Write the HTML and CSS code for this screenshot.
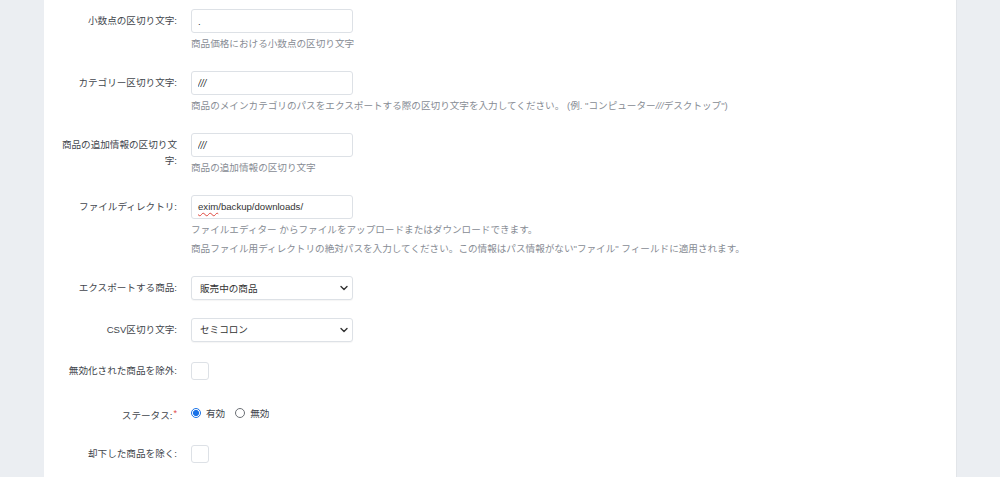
FILE: index.html
```html
<!DOCTYPE html>
<html lang="ja">
<head>
<meta charset="utf-8">
<title>エクスポート設定</title>
<link rel="stylesheet" href="styles.css">
</head>
<body>
<div class="page">
  <div class="panel">
    <div class="row">
      <label class="label">小数点の区切り文字:</label>
      <div class="field">
        <input class="input" type="text" value=".">
        <div class="help"><p>商品価格における小数点の区切り文字</p></div>
      </div>
    </div>
    <div class="row">
      <label class="label">カテゴリー区切り文字:</label>
      <div class="field">
        <input class="input slashes" type="text" value="///">
        <div class="help"><p>商品のメインカテゴリのパスをエクスポートする際の区切り文字を入力してください。 (例. "コンピューター<i>///</i>デスクトップ")</p></div>
      </div>
    </div>
    <div class="row">
      <label class="label">商品の追加情報の区切り文字:</label>
      <div class="field">
        <input class="input slashes" type="text" value="///">
        <div class="help"><p>商品の追加情報の区切り文字</p></div>
      </div>
    </div>
    <div class="row">
      <label class="label">ファイルディレクトリ:</label>
      <div class="field">
        <div class="input fake"><span class="typo">exim</span>/backup/downloads/</div>
        <div class="help">
          <p>ファイルエディター からファイルをアップロードまたはダウンロードできます。</p>
          <p>商品ファイル用ディレクトリの絶対パスを入力してください。この情報はパス情報がない"ファイル" フィールドに適用されます。</p>
        </div>
      </div>
    </div>
    <div class="row plain">
      <label class="label">エクスポートする商品:</label>
      <div class="field">
        <div class="select-wrap">
          <select class="select"><option>販売中の商品</option></select>
          <svg class="chev" width="8" height="6" viewBox="0 0 8 6"><path d="M1 1.5 L4 4.5 L7 1.5" fill="none" stroke="#333" stroke-width="1.4" stroke-linecap="round" stroke-linejoin="round"/></svg>
        </div>
      </div>
    </div>
    <div class="row plain">
      <label class="label">CSV区切り文字:</label>
      <div class="field">
        <div class="select-wrap">
          <select class="select"><option>セミコロン</option></select>
          <svg class="chev" width="8" height="6" viewBox="0 0 8 6"><path d="M1 1.5 L4 4.5 L7 1.5" fill="none" stroke="#333" stroke-width="1.4" stroke-linecap="round" stroke-linejoin="round"/></svg>
        </div>
      </div>
    </div>
    <div class="row plain">
      <label class="label">無効化された商品を除外:</label>
      <div class="field center"><span class="checkbox"></span></div>
    </div>
    <div class="row plain">
      <label class="label">ステータス:<span class="req">*</span></label>
      <div class="field center radios">
        <span class="radio-item"><span class="radio on"></span>有効</span>
        <span class="radio-item"><span class="radio"></span>無効</span>
      </div>
    </div>
    <div class="row plain">
      <label class="label">却下した商品を除く:</label>
      <div class="field center"><span class="checkbox"></span></div>
    </div>
  </div>
</div>
</body>
</html>
```

FILE: styles.css
```css
* { box-sizing: border-box; }
html, body { margin: 0; padding: 0; }
body {
  background: #ebeef2;
  font-family: "Liberation Sans", "Noto Sans CJK JP", sans-serif;
  font-size: 9.6px;
  color: #42464d;
  height: 477px;
  overflow: hidden;
}
.page {
  display: flex;
  justify-content: center;
}
.panel {
  width: 912px;
  background: #fff;
  min-height: 477px;
  padding: 9px 0 0 8px;
  box-shadow: 1px 0 0 #e2e5e9;
}
.row {
  display: grid;
  grid-template-columns: 125px 162px;
  column-gap: 14px;
  margin-bottom: 18px;
}
.row.plain { margin-bottom: 17.5px; }
.label {
  text-align: right;
  line-height: 16px;
  padding-top: 4px;
  color: #42464d;
}
.req { color: #e0494b; font-size: 9px; vertical-align: 3px; margin-left: 1px; }
.field { min-width: 0; }
.field.center { display: flex; align-items: center; height: 24px; }
.input {
  display: block;
  width: 162px;
  height: 24px;
  border: 1px solid #dde1e6;
  border-radius: 3px;
  padding: 0 6px;
  font: inherit;
  color: #333;
  background: #fff;
  outline: none;
}
.input.slashes { font-style: italic; font-size: 10px; }
.fake { line-height: 22px; white-space: nowrap; }
.typo {
  text-decoration: underline wavy #e0483e;
  text-decoration-thickness: 1px;
  text-underline-offset: 2px;
}
.help { padding-bottom: 1px; }
.help p {
  margin: 3px 0 0;
  line-height: 16px;
  color: #878c94;
  white-space: nowrap;
}
.help i { font-style: italic; }
.select-wrap { position: relative; width: 162px; height: 24px; }
.select {
  -webkit-appearance: none;
  appearance: none;
  width: 162px;
  height: 24px;
  border: 1px solid #dde1e6;
  border-radius: 3px;
  padding: 0 20px 0 8px;
  font: inherit;
  color: #333;
  background: #fff;
  box-shadow: 0 1px 1px rgba(0,0,0,0.04);
  outline: none;
}
.chev { position: absolute; right: 5px; top: 9px; pointer-events: none; }
.checkbox {
  display: inline-block;
  width: 18px;
  height: 18px;
  border: 1px solid #dde1e6;
  border-radius: 3px;
  background: #fff;
}
.radios { gap: 10px; }
.radio-item { display: inline-flex; align-items: center; gap: 5px; color: #42464d; }
.radio {
  display: inline-block;
  width: 10px;
  height: 10px;
  border: 1px solid #6b6f75;
  border-radius: 50%;
  background: #fff;
}
.radio.on {
  border: 1px solid #1a73e8;
  background: radial-gradient(circle, #1a73e8 0 2.8px, #fff 3.2px);
}
```
